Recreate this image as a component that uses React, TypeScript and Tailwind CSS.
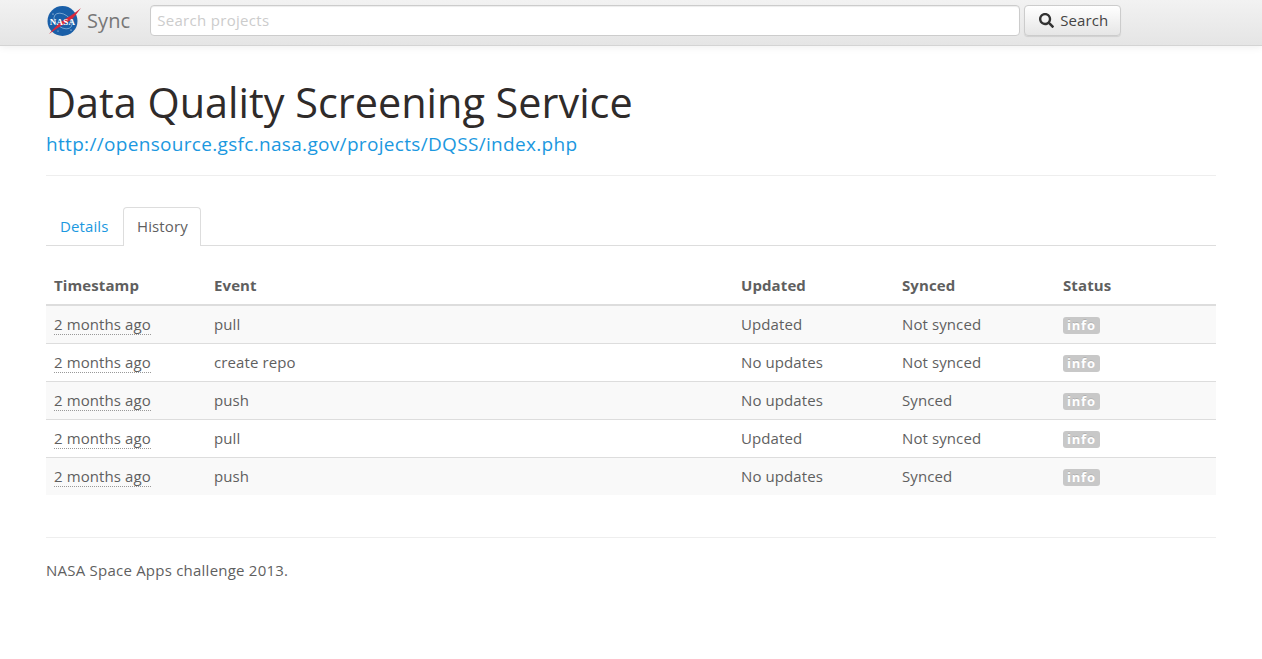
import { FaSearch } from "react-icons/fa";

const rows = [
  { event: "pull", updated: "Updated", synced: "Not synced" },
  { event: "create repo", updated: "No updates", synced: "Not synced" },
  { event: "push", updated: "No updates", synced: "Synced" },
  { event: "pull", updated: "Updated", synced: "Not synced" },
  { event: "push", updated: "No updates", synced: "Synced" },
];

function NasaLogo() {
  return (
    <svg width="36" height="32" viewBox="0 0 36 32" className="shrink-0">
      <circle cx="16.5" cy="16" r="15" fill="#1a5fa8" />
      <ellipse
        cx="17"
        cy="16"
        rx="10"
        ry="6.5"
        fill="none"
        stroke="#a8c8e4"
        strokeWidth="0.6"
        transform="rotate(35 17 16)"
      />
      <circle cx="7" cy="9" r="0.6" fill="#fff" />
      <circle cx="25" cy="25" r="0.6" fill="#fff" />
      <circle cx="12" cy="26" r="0.5" fill="#fff" />
      <path d="M3 29C13 22 20 18 24 15.5C28 13 31 8 35 3C30 7 25 11 20 13.5C14 17 8 23 3 29Z" fill="#d8283c" />
      <text
        x="16.5"
        y="19.5"
        textAnchor="middle"
        fontSize="9"
        fontWeight="700"
        letterSpacing="0.2"
        fill="#fff"
        fontFamily="'Liberation Serif', serif"
      >
        NASA
      </text>
    </svg>
  );
}

export default function App() {
  return (
    <div className="min-h-[659px] bg-white font-['Open_Sans',sans-serif] text-[15px] leading-[22px] tracking-[0.1px] text-[#5f5f5f]">
      <nav className="h-[46px] border-b border-[#d4d4d4] bg-gradient-to-b from-[#f2f2f2] to-[#e5e5e5] shadow-[0_1px_8px_rgba(0,0,0,0.07)]">
        <div className="mx-auto flex h-[41px] w-[1170px] items-center">
          <div className="flex items-center">
            <NasaLogo />
            <span className="ml-[5px] text-[20px] text-[#777]">Sync</span>
          </div>
          <input
            placeholder="Search projects"
            className="ml-[20px] h-[31px] w-[870px] rounded-[4px] border border-[#ccc] bg-white px-[6px] pb-[2px] text-[15px] tracking-[0.3px] shadow-[inset_0_1px_1px_rgba(0,0,0,0.075)] outline-none placeholder:text-[#ccc]"
          />
          <button
            type="button"
            className="ml-[4px] flex h-[31px] w-[97px] items-center justify-center gap-[6px] rounded-[4px] border border-[#ccc] bg-gradient-to-b from-white to-[#e6e6e6] pb-[2px] pl-[2px] text-[15px] text-[#444] shadow-[0_1px_1px_rgba(0,0,0,0.1)]"
          >
            <FaSearch size={15} className="mt-[2px] text-[#333]" />
            Search
          </button>
        </div>
      </nav>

      <main className="mx-auto w-[1170px]">
        <header className="border-b border-[#eee] pt-[29px] pb-[17px]">
          <h1 className="text-[41.4px] leading-[55px] font-normal tracking-normal text-[#2f2b2a]">
            Data Quality Screening Service
          </h1>
          <a className="block text-[19px] leading-[28px] tracking-[0.32px] text-[#1b98e0]">
            http://opensource.gsfc.nasa.gov/projects/DQSS/index.php
          </a>
        </header>

        <ul className="mt-[31px] flex h-[39px] border-b border-[#ddd]">
          <li className="flex h-[38px] items-center px-[14px] text-[#1b98e0]">Details</li>
          <li className="ml-[1px] flex h-[39px] w-[78px] items-center justify-center rounded-t-[4px] border border-b-0 border-[#ddd] bg-white pb-[2px]">
            History
          </li>
        </ul>

        <table className="mt-[23px] w-full table-fixed border-collapse">
          <colgroup>
            <col className="w-[160px]" />
            <col className="w-[527px]" />
            <col className="w-[161px]" />
            <col className="w-[161px]" />
            <col />
          </colgroup>
          <thead>
            <tr className="h-[36px] border-b-2 border-[#ddd] text-left">
              <th className="px-[8px] pb-[4px] font-bold">Timestamp</th>
              <th className="px-[8px] pb-[4px] font-bold">Event</th>
              <th className="px-[8px] pb-[4px] font-bold">Updated</th>
              <th className="px-[8px] pb-[4px] font-bold">Synced</th>
              <th className="px-[8px] pb-[4px] font-bold">Status</th>
            </tr>
          </thead>
          <tbody>
            {rows.map((row, index) => (
              <tr
                key={index}
                className={`h-[38px] ${index > 0 ? "border-t border-[#ddd]" : ""} ${index % 2 === 0 ? "bg-[#f9f9f9]" : ""}`}
              >
                <td className="px-[8px]">
                  <span className="border-b border-dotted border-[#999]">2 months ago</span>
                </td>
                <td className="px-[8px]">{row.event}</td>
                <td className="px-[8px]">{row.updated}</td>
                <td className="px-[8px]">{row.synced}</td>
                <td className="px-[8px]">
                  <span className="inline-block rounded-[3px] bg-[#c8c8c8] px-[4px] text-[13px] leading-[17px] font-bold tracking-[0.8px] text-white [text-shadow:0_-1px_0_rgba(0,0,0,0.12)]">
                    info
                  </span>
                </td>
              </tr>
            ))}
          </tbody>
        </table>

        <footer className="mt-[42px] border-t border-[#eee] pt-[21px] tracking-[0.23px]">
          NASA Space Apps challenge 2013.
        </footer>
      </main>
    </div>
  );
}
